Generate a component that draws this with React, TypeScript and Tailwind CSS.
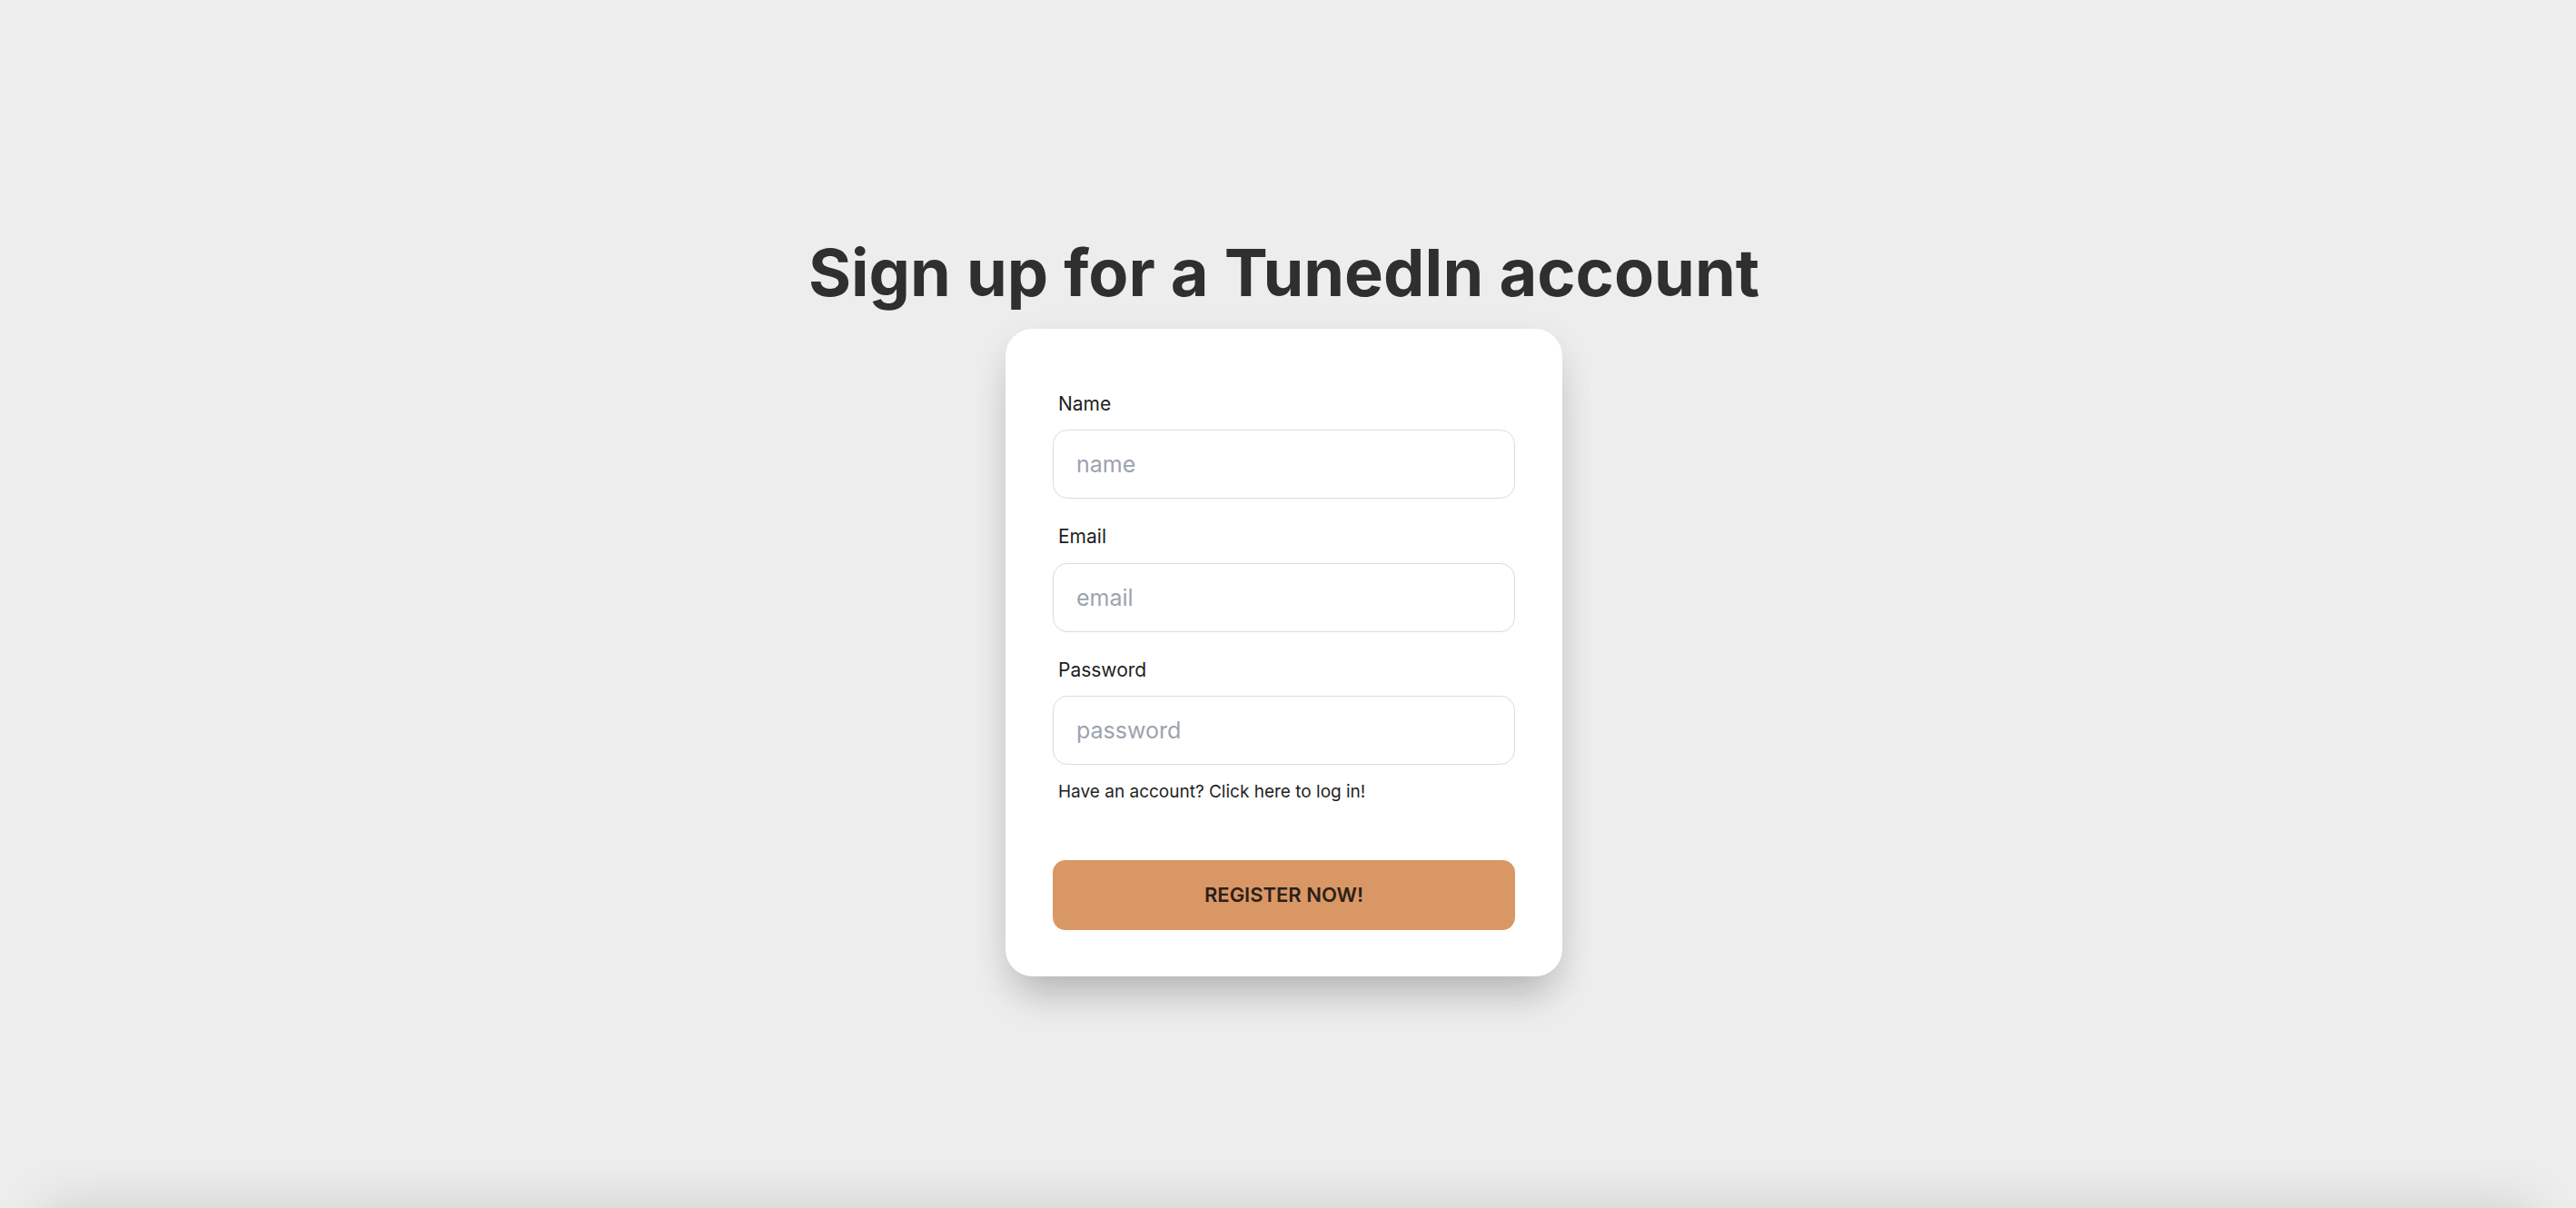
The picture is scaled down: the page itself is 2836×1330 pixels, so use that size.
import React from 'react';

const Field = ({ label, placeholder, type }: { label: string; placeholder: string; type: string }) => {
  return (
    <div className="flex flex-col">
      <label className="mb-[13px] px-[6px] text-[21px] leading-[1.5] text-[#1f1f1f]">{label}</label>
      <input
        type={type}
        placeholder={placeholder}
        className="h-[76px] w-full rounded-[16px] border border-[#d9dce1] bg-white px-[25px] text-[25px] text-[#1f1f1f] placeholder:text-[#9ca3af] outline-none"
      />
    </div>
  );
};

const App = () => {
  return (
    <div className="h-screen overflow-hidden bg-[#ededed] font-['Inter',sans-serif]">
      <div className="flex h-full flex-col items-center justify-center pr-[9px] pt-[8px]">
        <h1 className="mb-[26px] text-[72px] font-bold leading-none tracking-normal text-[#2f2f2f]">
          Sign up for a TunedIn account
        </h1>
        <div className="w-[613px] rounded-[30px] bg-white px-[52px] pb-[51px] pt-[67px] shadow-[0_10px_40px_rgba(0,0,0,0.07),0_30px_45px_-12px_rgba(0,0,0,0.2)]">
          <div className="flex flex-col gap-[26px]">
            <Field label="Name" placeholder="name" type="text" />
            <Field label="Email" placeholder="email" type="email" />
            <Field label="Password" placeholder="password" type="password" />
          </div>
          <p className="mt-[16px] px-[6px] text-[19px] leading-[1.5] text-[#1f1f1f]">Have an account? Click here to log in!</p>
          <button className="mt-[60px] h-[77px] w-full rounded-[14px] bg-[#da9766] text-[22px] font-semibold text-[#2a2118]">
            REGISTER NOW!
          </button>
        </div>
      </div>
      <footer className="mx-[50px] h-[80px] bg-[#ededed] shadow-[0_0_60px_rgba(0,0,0,0.14)]" />
    </div>
  );
};

export default App;
